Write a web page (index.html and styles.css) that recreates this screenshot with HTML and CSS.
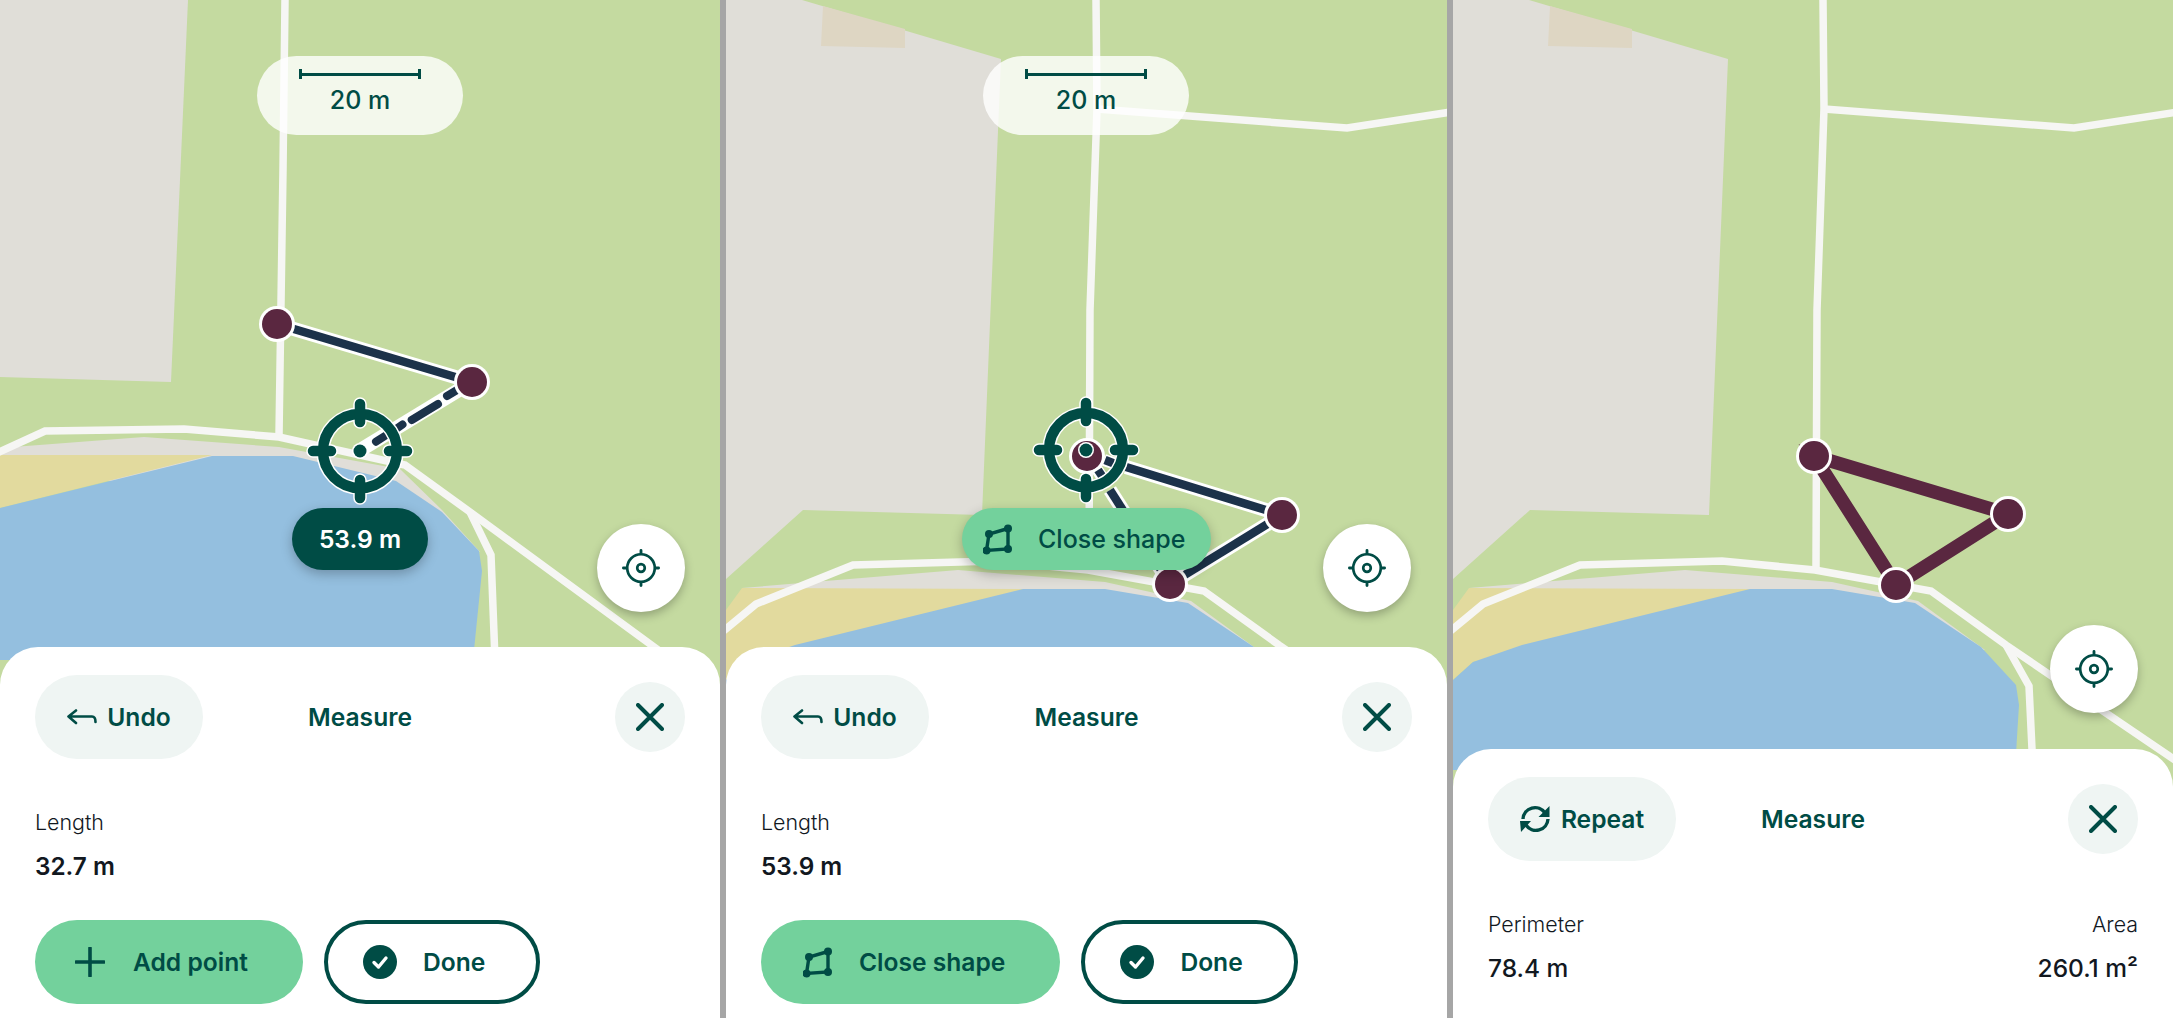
FILE: index.html
```html
<!DOCTYPE html>
<html lang="en">
<head>
    <meta charset="UTF-8">
    <title>Measure</title>
    <link rel="stylesheet" href="styles.css">
</head>
<body>
<!-- shared shapes -->
<svg class="defs">
    <defs>
        <g id="map-b">
            <polygon fill="#e0ded8" points="0,0 76,0 275,59 256,515 77,510 0,579"/>
            <polygon fill="#ded6c3" points="97,6 179,29 179,48 95,46"/>
            <polygon fill="#e0ded8" points="16,588 232,570 379,582 465,601 532,650 400,640 16,600"/>
            <polygon fill="#e2da9e" points="0,610 16,588 300,589 20,662 0,680"/>
            <polygon fill="#94bfdf" points="0,680 20,662 69,645 297,589 379,589 462,603 528,647 563,685 566,705 562,770 0,770"/>
            <g class="road">
                <polyline points="370,0 371,109 364,310 363,567"/>
                <polyline points="371,109 621,128 725,112"/>
                <polyline points="-5,633 30,604 127,565 269,561 362,570 478,591 553,645 725,762"/>
                <polyline points="553,645 576,686 580,770"/>
            </g>
        </g>
        <g id="pin">
            <circle r="18" fill="#fff"/>
            <circle r="15" fill="#5a2740"/>
        </g>
        <g id="crosshair">
            <g class="cross cross-halo">
                <circle r="37"/>
                <path d="M-47 0H-29M29 0H47M0 -47V-29M0 29V47"/>
                <circle r="8" class="cross-dot"/>
            </g>
            <g class="cross">
                <circle r="37"/>
                <path d="M-47 0H-29M29 0H47M0 -47V-29M0 29V47"/>
                <circle r="6.5" class="cross-dot"/>
            </g>
        </g>
        <symbol id="ico-locate" viewBox="0 0 40 40">
            <circle cx="20" cy="20" r="14.5" fill="none" stroke="#004c45" stroke-width="2.8"/>
            <circle cx="20" cy="20" r="4" fill="none" stroke="#004c45" stroke-width="2.8"/>
            <path d="M20 1.500V4.500M20 35.500V38.500M1.500 20H4.500M35.500 20H38.500" stroke="#004c45" stroke-width="3" stroke-linecap="round"/>
        </symbol>
        <symbol id="ico-x" viewBox="0 0 28 28">
            <path d="M2 2L26 26M26 2L2 26" stroke="#004c45" stroke-width="4" stroke-linecap="round"/>
        </symbol>
        <symbol id="ico-undo" viewBox="0 0 30 16">
            <path d="M9 1.5L1.5 7.5L9 14M1.5 7.5H25Q28.500 7.500 28.500 13" fill="none" stroke="#004c45" stroke-width="2.600" stroke-linecap="round" stroke-linejoin="round"/>
        </symbol>
        <symbol id="ico-repeat" viewBox="0 0 31 30">
            <path d="M3 15A12 12 0 0 1 25 9M28 15A12 12 0 0 1 6 21" fill="none" stroke="#004c45" stroke-width="3.400"/>
            <path d="M29.500 2V13H18.500ZM0 17H11L1 28Z" fill="#004c45"/>
        </symbol>
        <symbol id="ico-plus" viewBox="0 0 30 30">
            <path d="M15 1V29M1 15H29" stroke="#004c45" stroke-width="3.600" stroke-linecap="round"/>
        </symbol>
        <symbol id="ico-shape" viewBox="0 0 30 31">
            <path d="M25 4.500L6 10L3.500 26.500L25 25Z" fill="none" stroke="#004c45" stroke-width="3.400"/>
            <circle cx="25" cy="4.500" r="4" fill="#004c45"/>
            <circle cx="6" cy="10" r="4" fill="#004c45"/>
            <circle cx="3.500" cy="26.500" r="4" fill="#004c45"/>
            <circle cx="25" cy="25" r="4" fill="#004c45"/>
        </symbol>
        <symbol id="ico-done" viewBox="0 0 34 34">
            <circle cx="17" cy="17" r="17" fill="#004c45"/>
            <path d="M11 17.500L15.500 22L23 13" fill="none" stroke="#fff" stroke-width="3.400" stroke-linecap="round" stroke-linejoin="round"/>
        </symbol>
    </defs>
</svg>

<div class="screens">

    <!-- adding points -->
    <section class="panel">
        <svg class="map" width="721" height="1018">
            <polygon fill="#e0ded8" points="0,0 188,0 171,382 0,377"/>
            <polygon fill="#e0ded8" points="0,448 144,437 279,447 400,469 442,510 480,552 300,500 0,470"/>
            <polygon fill="#e2da9e" points="0,455 212,455 0,508"/>
            <polygon fill="#94bfdf" points="0,508 212,456 293,456 396,481 442,512 479,551 482,571 473,660 0,660"/>
            <g class="road">
                <polyline points="285,0 283,170 279,435"/>
                <polyline points="-5,454 45,431 184,429 279,437 405,465 470,512 665,655"/>
                <polyline points="470,512 491,555 495,660"/>
            </g>
            <line class="halo" x1="277" y1="324" x2="472" y2="382"/>
            <line class="seg" x1="277" y1="324" x2="472" y2="382"/>
            <line class="halo" x1="362" y1="449" x2="472" y2="382"/>
            <g class="dash">
                <line x1="376" y1="441.700" x2="388" y2="434"/>
                <line x1="397.500" y1="428" x2="402.500" y2="424.500"/>
                <line x1="411.700" y1="420" x2="438" y2="404"/>
                <line x1="447" y1="396" x2="457" y2="390"/>
            </g>
            <use href="#pin" x="277" y="324"/>
            <use href="#pin" x="472" y="382"/>
            <use href="#crosshair" x="360" y="451"/>
        </svg>
        <div class="scale">
            <span class="scale-bar"></span>
            <span>20 m</span>
        </div>
        <div class="float-pill float-dark">53.9 m</div>
        <div class="locate">
            <svg width="38" height="38"><use href="#ico-locate"/></svg>
        </div>
        <div class="sheet">
            <div class="sheet-head">
                <button class="back-btn"><svg width="30" height="16"><use href="#ico-undo"/></svg>Undo</button>
                <div class="title">Measure</div>
                <button class="close-btn"><svg width="28" height="28"><use href="#ico-x"/></svg></button>
            </div>
            <div class="stats">
                <div>
                    <div class="stat-label">Length</div>
                    <div class="stat-value">32.7 m</div>
                </div>
            </div>
            <div class="actions">
                <button class="act act-main act-add"><svg width="30" height="30"><use href="#ico-plus"/></svg>Add point</button>
                <button class="act act-line"><svg width="34" height="34"><use href="#ico-done"/></svg>Done</button>
            </div>
        </div>
    </section>

    <!-- can close the shape -->
    <section class="panel">
        <svg class="map" width="721" height="1018">
            <use href="#map-b"/>
            <line class="halo" x1="400" y1="467" x2="556" y2="515"/>
            <line class="seg" x1="400" y1="467" x2="556" y2="515"/>
            <line class="halo" x1="384" y1="490" x2="444" y2="584"/>
            <line class="seg" x1="384" y1="490" x2="444" y2="584"/>
            <line class="halo" x1="556" y1="515" x2="444" y2="584"/>
            <line class="seg" x1="556" y1="515" x2="444" y2="584"/>
            <use href="#pin" x="361" y="456"/>
            <line class="halo-thin" x1="378" y1="460" x2="390" y2="464"/>
            <line class="halo-thin" x1="370" y1="468" x2="378" y2="480"/>
            <line class="seg" x1="379" y1="460" x2="388" y2="463.500"/>
            <line class="seg" x1="372" y1="470" x2="376" y2="476"/>
            <use href="#pin" x="556" y="515"/>
            <use href="#pin" x="444" y="584"/>
            <use href="#crosshair" x="360" y="450"/>
        </svg>
        <div class="scale">
            <span class="scale-bar"></span>
            <span>20 m</span>
        </div>
        <div class="float-pill float-shape">
            <svg width="30" height="31"><use href="#ico-shape"/></svg>
            Close shape
        </div>
        <div class="locate">
            <svg width="38" height="38"><use href="#ico-locate"/></svg>
        </div>
        <div class="sheet">
            <div class="sheet-head">
                <button class="back-btn"><svg width="30" height="16"><use href="#ico-undo"/></svg>Undo</button>
                <div class="title">Measure</div>
                <button class="close-btn"><svg width="28" height="28"><use href="#ico-x"/></svg></button>
            </div>
            <div class="stats">
                <div>
                    <div class="stat-label">Length</div>
                    <div class="stat-value">53.9 m</div>
                </div>
            </div>
            <div class="actions">
                <button class="act act-main act-close"><svg width="30" height="31"><use href="#ico-shape"/></svg>Close shape</button>
                <button class="act act-line"><svg width="34" height="34"><use href="#ico-done"/></svg>Done</button>
            </div>
        </div>
    </section>

    <!-- finished shape -->
    <section class="panel">
        <svg class="map" width="720" height="1018">
            <use href="#map-b"/>
            <polygon class="shape" points="361,456 555,514 443,585"/>
            <use href="#pin" x="361" y="456"/>
            <use href="#pin" x="555" y="514"/>
            <use href="#pin" x="443" y="585"/>
        </svg>
        <div class="locate locate-low">
            <svg width="38" height="38"><use href="#ico-locate"/></svg>
        </div>
        <div class="sheet">
            <div class="sheet-head">
                <button class="back-btn back-repeat"><svg width="31" height="30"><use href="#ico-repeat"/></svg>Repeat</button>
                <div class="title">Measure</div>
                <button class="close-btn"><svg width="28" height="28"><use href="#ico-x"/></svg></button>
            </div>
            <div class="stats stats-last">
                <div>
                    <div class="stat-label">Perimeter</div>
                    <div class="stat-value">78.4 m</div>
                </div>
                <div class="stat-right">
                    <div class="stat-label">Area</div>
                    <div class="stat-value">260.1 m²</div>
                </div>
            </div>
        </div>
    </section>

</div>
</body>
</html>
```

FILE: styles.css
```css
* {box-sizing: border-box;}
html, body {margin: 0; padding: 0; height: 100%; overflow: hidden;}
body {font-family: Inter, "Noto Sans", sans-serif; color: #004c45;}
button {font: inherit; color: inherit; border: 0; padding: 0;}

.defs {display: none;}

.screens {display: grid; grid-template-columns: 720px 721px 720px; gap: 6px;
    height: 100vh; background: #a6a6a6;}

.panel {position: relative; overflow: hidden; background: #c4daa0;
    display: flex; flex-direction: column; justify-content: flex-end;}

/* map canvas */
.map {position: absolute; left: 0; top: 0;}
.road polyline {fill: none; stroke: #f6f6f4; stroke-width: 7.5;}
.halo {stroke: #fff; stroke-width: 14;}
.halo-thin {stroke: #fff; stroke-width: 12;}
.seg {stroke: #1c324a; stroke-width: 8.5;}
.dash line {stroke: #1c324a; stroke-width: 8; stroke-linecap: round;}
.shape {fill: none; stroke: #5a2740; stroke-width: 13.5;}
.cross circle, .cross path {fill: none; stroke: #004c45; stroke-width: 10.5;}
.cross path {stroke-linecap: round;}
.cross .cross-dot {fill: #004c45; stroke: none;}
.cross-halo circle, .cross-halo path {stroke: #fff; stroke-width: 13.5;}
.cross-halo .cross-dot {fill: #fff;}

/* things over the map */
.scale {position: absolute; left: 257px; top: 56px; width: 206px; height: 79px; border-radius: 40px;
    background: rgba(255, 255, 255, .8); font-size: 25px; font-weight: 500;
    display: flex; flex-direction: column; align-items: center; padding-top: 13px; gap: 7px; line-height: 29px;}
.scale-bar {display: block; width: 122px; height: 10px; border: solid #004c45; border-width: 0 3px;
    background: linear-gradient(#004c45, #004c45) center / 100% 3px no-repeat;}

.float-pill {position: absolute; top: 508px; height: 62px; border-radius: 31px; font-size: 25px; font-weight: 500;
    display: flex; align-items: center; box-shadow: 0 4px 12px rgba(0, 0, 0, .25);}
.float-dark {left: 292px; width: 136px; justify-content: center; background: #004c45; color: #fff; font-size: 24.600px; font-weight: 600;}
.float-shape {left: 236px; width: 249px; padding-left: 21px; gap: 25px; background: #73d19c;}

.locate {position: absolute; left: 597px; top: 524px; width: 88px; height: 88px; border-radius: 50%;
    background: #fff; box-shadow: 0 4px 10px rgba(0, 0, 0, .25);
    display: flex; align-items: center; justify-content: center;}
.locate-low {top: 625px;}

/* bottom sheet */
.sheet {position: relative; background: #fff; border-radius: 38px 38px 0 0; padding: 28px 35px 14px 35px;}
.sheet-head {display: grid; grid-template-columns: 1fr auto 1fr; align-items: center; height: 84px;}
.title {font-size: 24.600px; font-weight: 600;}
.back-btn {justify-self: start; height: 84px; width: 168px; border-radius: 42px; background: #eff5f3;
    font-size: 24.600px; font-weight: 600; display: flex; align-items: center; justify-content: center; gap: 10px;}
.back-repeat {width: 188px;}
.close-btn {justify-self: end; width: 70px; height: 70px; border-radius: 50%; background: #eff5f3;
    display: flex; align-items: center; justify-content: center;}

.stats {display: flex; justify-content: space-between; margin-top: 51px;}
.stats-last {margin-bottom: 22px;}
.stat-label {font-size: 21.400px; line-height: 24px; font-weight: 300; color: #12181f;}
.stat-value {font-size: 24.300px; line-height: 28px; font-weight: 600; color: #12181f; margin-top: 18px;}
.stats-last .stat-value {font-size: 24.500px; font-weight: 500;}
.stat-right {text-align: right;}

.actions {display: flex; gap: 21px; margin-top: 40px;}
.act {height: 84px; border-radius: 42px; font-size: 24.600px; font-weight: 600;
    display: flex; align-items: center; padding-right: 55px;}
.act-main {background: #73d19c;}
.act-add {padding-left: 40px; gap: 28px;}
.act-close {padding-left: 42px; gap: 26px;}
.act-line {background: #fff; border: 4px solid #004c45; padding-left: 35px; padding-right: 51px; gap: 26px;}
```
